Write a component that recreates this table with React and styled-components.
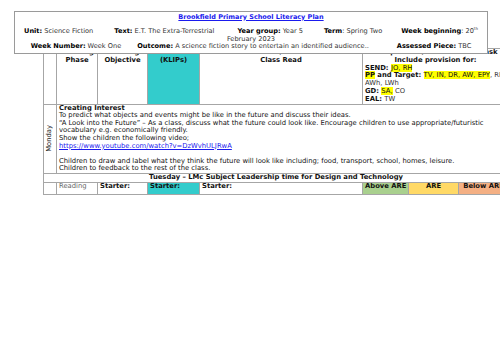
import styled, { createGlobalStyle } from "styled-components";

const GlobalStyle = createGlobalStyle`
  html, body {
    margin: 0;
    padding: 0;
    background: #fff;
    overflow: hidden;
  }
  body {
    font-family: "DejaVu Sans", Verdana, sans-serif;
  }
`;

const Page = styled.div`
  position: relative;
  width: 500px;
  height: 353px;
  overflow: hidden;
  box-sizing: border-box;
  padding: 48px 0 0 43px;
`;

const InfoBox = styled.div`
  position: absolute;
  left: 14px;
  top: 11px;
  width: 474px;
  height: 43px;
  box-sizing: border-box;
  border: 1px solid #9a9a9a;
  background: #fff;
  padding-top: 1.5px;
  font-size: 6.6px;
  line-height: 7.5px;
  text-align: center;
  color: #333;
`;

const Title = styled.div`
  font-size: 6.5px;
  font-weight: 700;
  color: #1a1aee;
  text-decoration: underline;
  margin-bottom: 7.25px;
`;

const Line = styled.div`
  white-space: nowrap;
`;

const Field = styled.span`
  margin-left: ${(p) => p.$gap || 0}px;
`;

const Label = styled.b`
  color: #000;
  font-weight: 700;
`;

const Sup = styled.sup`
  font-size: 4px;
  line-height: 0;
`;

const PlanTable = styled.table`
  border-collapse: collapse;
  table-layout: fixed;
  width: 465px;
  font-size: 6.8px;
  line-height: 7.6px;
  color: #111;
`;

const Row = styled.tr`
  height: ${(p) => p.$h}px;
  line-height: ${(p) => p.$lh || 7.6}px;
`;

const Cell = styled.td`
  border: 1px solid #a6a6a6;
  padding: 0 2px;
  vertical-align: ${(p) => p.$valign || "top"};
  text-align: ${(p) => p.$align || "left"};
  font-weight: ${(p) => (p.$bold ? 700 : 400)};
  background: ${(p) => p.$bg || "transparent"};
  color: ${(p) => p.$color || "#111"};
  overflow: hidden;
  white-space: nowrap;
`;

const DayLabel = styled.div`
  writing-mode: vertical-rl;
  transform: rotate(180deg);
  margin: 0 auto;
  color: #222;
`;

const Provision = styled.div`
  text-align: left;
  font-weight: 700;
`;

const Mark = styled.span`
  background: #ffff00;
  font-weight: ${(p) => (p.$bold ? 700 : 400)};
`;

const Plain = styled.span`
  font-weight: 400;
  color: #333;
`;

const Strong = styled.div`
  font-weight: 700;
`;

const Link = styled.a`
  color: #1a1aee;
  text-decoration: underline;
`;

const Blank = styled.div`
  height: 7.6px;
`;

const colWidths = [13, 41, 50, 52, 163, 46, 50, 50];

export default function App() {
  return (
    <>
      <GlobalStyle />
      <Page>
        <PlanTable>
          <colgroup>
            {colWidths.map((w, i) => (
              <col key={i} style={{ width: w }} />
            ))}
          </colgroup>
          <tbody>
            <Row $h={55} $lh={7.8}>
              <Cell />
              <Cell $align="center" $bold>
                Learning
                <br />
                Phase
              </Cell>
              <Cell $align="center" $bold>
                Learning
                <br />
                Objective
              </Cell>
              <Cell $align="center" $bold $bg="#33cccc">
                Success
                <br />
                (KLIPs)
              </Cell>
              <Cell $align="center" $bold>
                Shared / Guided
                <br />
                Class Read
              </Cell>
              <Cell colSpan={3} $align="center" $bold>
                Independent/Differentiated Task
                <br />
                Include provision for:
                <Provision>
                  SEND: <Mark>JO, RH</Mark>
                  <br />
                  <Mark $bold>PP</Mark> and Target: <Mark>TV, IN, DR, AW, EPY</Mark>
                  <Plain>, RH,</Plain>
                  <br />
                  <Plain>AWh, LWh</Plain>
                  <br />
                  GD: <Mark>SA,</Mark> <Plain>CO</Plain>
                  <br />
                  EAL: <Plain>TW</Plain>
                </Provision>
              </Cell>
            </Row>
            <Row $h={69}>
              <Cell $valign="middle">
                <DayLabel>Monday</DayLabel>
              </Cell>
              <Cell colSpan={7}>
                <Strong>Creating Interest</Strong>
                <div>
                  To predict what objects and events might be like in the future and discuss their
                  ideas.
                </div>
                <div>
                  “A Look into the Future” – As a class, discuss what the future could look like.
                  Encourage children to use appropriate/futuristic
                </div>
                <div>vocabulary e.g. economically friendly.</div>
                <div>Show the children the following video;</div>
                <div>
                  <Link>https://www.youtube.com/watch?v=DzWvhULJRwA</Link>
                </div>
                <Blank />
                <div>
                  Children to draw and label what they think the future will look like including;
                  food, transport, school, homes, leisure.
                </div>
                <div>Children to feedback to the rest of the class.</div>
              </Cell>
            </Row>
            <Row $h={9}>
              <Cell colSpan={8} $align="center" $bold>
                Tuesday – LMc Subject Leadership time for Design and Technology
              </Cell>
            </Row>
            <Row $h={12}>
              <Cell />
              <Cell $color="#666">Reading</Cell>
              <Cell $bold>Starter:</Cell>
              <Cell $bold $bg="#33cccc">
                Starter:
              </Cell>
              <Cell $bold>Starter:</Cell>
              <Cell $bold $align="center" $bg="#a9d08e">
                Above ARE
              </Cell>
              <Cell $bold $align="center" $bg="#ffd966">
                ARE
              </Cell>
              <Cell $bold $align="center" $bg="#f4b084">
                Below ARE
              </Cell>
            </Row>
          </tbody>
        </PlanTable>

        <InfoBox>
          <Title>Brookfield Primary School Literacy Plan</Title>
          <Line>
            <Field>
              <Label>Unit:</Label> Science Fiction
            </Field>
            <Field $gap={21}>
              <Label>Text:</Label> E.T. The Extra-Terrestrial
            </Field>
            <Field $gap={23}>
              <Label>Year group:</Label> Year 5
            </Field>
            <Field $gap={21}>
              <Label>Term</Label>: Spring Two
            </Field>
            <Field $gap={19}>
              <Label>Week beginning</Label>: 20<Sup>th</Sup>
            </Field>
          </Line>
          <Line>February 2023</Line>
          <Line>
            <Field>
              <Label>Week Number:</Label> Week One
            </Field>
            <Field $gap={16}>
              <Label>Outcome:</Label> A science fiction story to entertain an identified audience..
            </Field>
            <Field $gap={28}>
              <Label>Assessed Piece:</Label> TBC
            </Field>
          </Line>
        </InfoBox>
      </Page>
    </>
  );
}
